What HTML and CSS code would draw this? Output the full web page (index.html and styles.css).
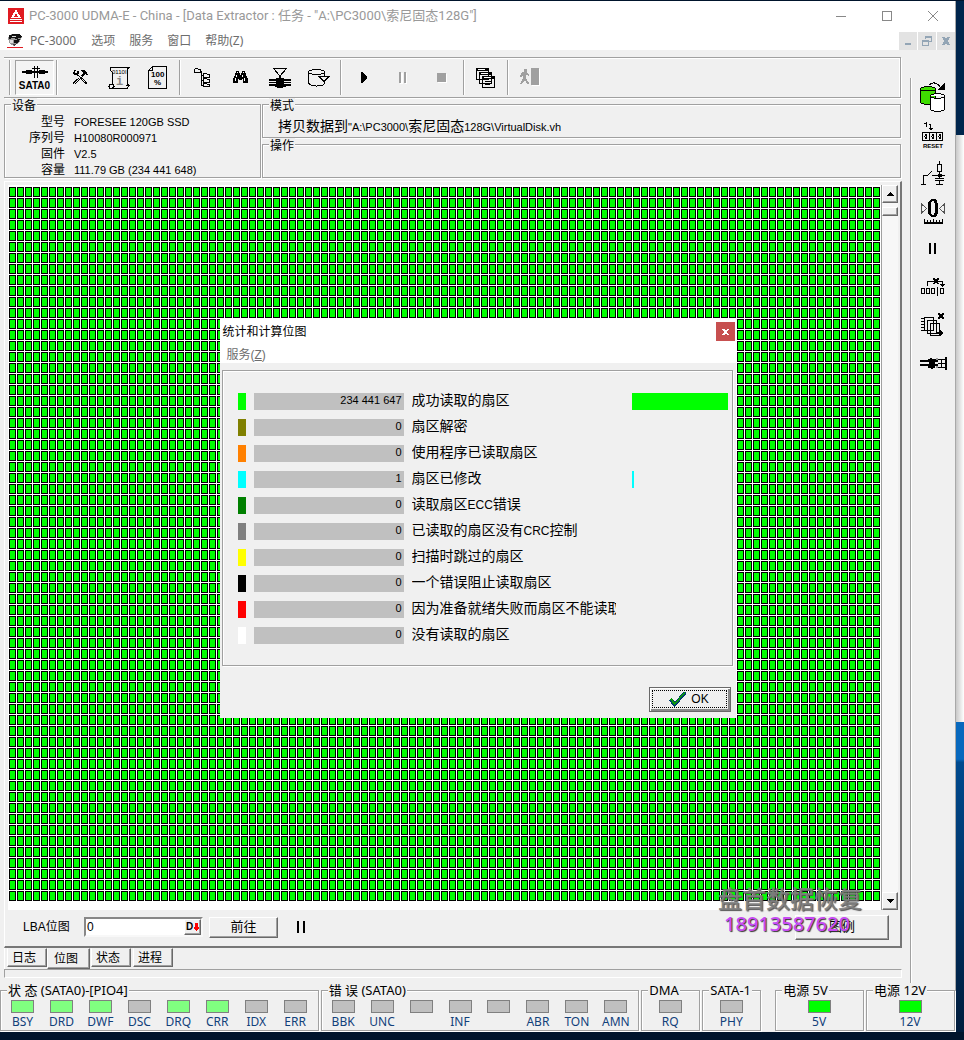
FILE: index.html
```html
<!DOCTYPE html>
<html lang="zh-CN">
<head>
<meta charset="utf-8">
<title>PC-3000 UDMA-E</title>
<link rel="stylesheet" href="styles.css">
</head>
<body>
<div class="desktop">
<div class="window">
  <header class="titlebar">
    <svg class="logo" width="16" height="16" viewBox="0 0 16 16"><path fill="#e01b22" d="M0 0h16v16H0z"/><path fill="#fff" d="M8 1l5 9H3zM2 11h12v1H2zM2 13h12v1H2z"/><path fill="#e01b22" d="M8 5l2 4H6z"/></svg>
    <h1>PC-3000 UDMA-E - China - [Data Extractor : 任务 - "A:\PC3000\索尼固态128G"]</h1>
    <div class="win-buttons">
      <button aria-label="最小化"><svg width="11" height="11"><path d="M0 5.500h10"/></svg></button>
      <button aria-label="最大化"><svg width="11" height="11"><path d="M.5.5h9v9h-9z"/></svg></button>
      <button aria-label="关闭"><svg width="11" height="11"><path d="M0 0l10 10M10 0L0 10"/></svg></button>
    </div>
  </header>
  <nav class="menubar">
    <svg class="logo" width="16" height="16" viewBox="0 0 16 16"><path fill="#999" d="M1 4l4-3h8l2 3-3 6-5 3-5-3z"/><path fill="#111" d="M2 2l5-1h6l2 3-5 2-4-1-4 1zM7 7l6-1-2 4H7z"/><path fill="#ddd" d="M5 3h4v1H5zM3 7h3v3H3z"/><path fill="#444" d="M3 9l3 2 5-1-4 3z"/><path fill="#e01b22" d="M0 14h16v1H0z"/></svg>
    <a href="#">PC-3000</a><a href="#">选项</a><a href="#">服务</a><a href="#">窗口</a><a href="#">帮助(Z)</a>
    <div class="mdi">
      <button aria-label="最小化"><svg width="10" height="10"><path d="M2 7h6v2H2z"/></svg></button>
      <button aria-label="还原"><svg width="10" height="10"><path fill-rule="evenodd" d="M3 0h7v6H7V5h2V2H4v1H3zM0 4h7v6H0zm1 2v3h5V6z"/></svg></button>
      <button aria-label="关闭"><svg width="10" height="10"><path d="M1 1h3l1 2 1-2h3L7 5l2 4H6L5 7 4 9H1l2-4z"/></svg></button>
    </div>
  </nav>

  <div class="workspace">
    <main class="main">
      <div class="toolbar">
        <i class="sep"></i>
        <button class="tool pressed"><svg width="26" height="13" viewBox="0 0 26 13"><path d="M0 5h26v2H0zM4 4h6v4H4zM17 4h6v4h-6zM12 0h1v12h-1zM15 0h1v12h-1zM10 2h8v1h-8z"/></svg><span>SATA0</span></button>
        <i class="sep wide"></i>
        <button class="tool" aria-label="工具"><svg width="16" height="15" viewBox="0 0 16 15"><path d="M2 0h2v1H3v2h2V1h2v3H6v1h1v1h1v1H7V6H5V5H2V4H1V2h1zM9 0h4v1h1v1h1v2h1v1h-2V4h-1v1h-1v1h-1v1h-1V6H9V5h1V4h1V2h-1V1H9zM8 7h2v1h1v1h1v1h1v1h1v1h1v2h-2v-1h-1v-1h-1v-1h-1v-1H9V9H8zM6 8h1v1H6v1H5v1H4v1H3v1H2v1H1v-2h1v-1h1v-1h1V9h2zM7 9h1v1H7v1H6v1H5v1H4v1H3v-1h1v-1h1v-1h1v-1h1z"/><path fill="#f0f0f0" d="M10 9h1v1h1v1h1v1h-1v-1h-1v-1h-1z"/></svg></button>
        <button class="tool" aria-label="信息"><svg width="22" height="22" viewBox="0 0 22 22"><path fill="none" stroke="#000" d="M3 .5h18l-2 2v14l2 2-2 3H2l-1-2 1-2h2V5L2 3zM1 17.500h4l1 2-2 2M18 18l2 1"/><text x="4" y="7" font-size="6">0110I</text><text x="8" y="18" font-size="12" font-weight="700" fill="#888" font-family="Liberation Mono">i</text></svg></button>
        <button class="tool" aria-label="百分比"><svg width="19" height="23" viewBox="0 0 19 23"><path fill="none" stroke="#000" d="M4.500.5h14v22H.5V4.500z M4.500 1v3.500H1"/><text x="3" y="11" font-size="8" font-weight="700">100</text><text x="6" y="19" font-size="8" font-weight="700">%</text></svg></button>
        <i class="sep"></i>
        <button class="tool" aria-label="树"><svg width="16" height="20" viewBox="0 0 16 20"><path fill="none" stroke="#000" d="M.5 1.500l1-1h2l1 1h2v3h-6zM7.500 3v15M7 7.500h2M7 12.500h2M7 17.500h2M9.500 5.500h3l1 1h2v3h-6zM9.500 10.500h3l1 1h2v3h-6zM9.500 15.500h3l1 1h2v2h-6zM9 9.500h7M9 14.500h7M9 18.500h7"/></svg></button>
        <button class="tool" aria-label="查找"><svg width="15" height="13" viewBox="0 0 15 13"><path d="M3 0h3v2h1v2h1V2h1V0h3v2h1v2l2 4v4h-5V8H9v1H6V8H5v4H0V8l2-4V2h1z"/><path fill="#fff" d="M4 1h1v1H4zM10 1h1v1h-1zM3 4h1v2H3zM9 4h1v2H9zM2 7h1v3H2zM11 7h1v3h-1z"/></svg></button>
        <button class="tool" aria-label="过滤"><svg width="22" height="20" viewBox="0 0 22 20"><path fill="none" stroke="#000" d="M4.500.5h13L11 8z"/><path d="M10 7h2v3h3v1h7v2H0v-2h7v-1h3zM0 14h22v1H0zM7 13h8v3H7zM0 16h22v2h-5v1h-3v1H8v-1H6v-1H0z"/></svg></button>
        <button class="tool" aria-label="磁盘"><svg width="22" height="18" viewBox="0 0 22 18"><path fill="none" stroke="#000" d="M.5 3v11c1 2 4 3 8 3s8-1 8-3V13M16.500 7V3c0-1-3-2.500-8-2.500S.5 2 .5 3s3 2.500 8 2.500 8-1.500 8-2.500M11 7.500h10l-5 5z"/></svg></button>
        <i class="sep wide"></i>
        <button class="tool" aria-label="开始"><svg width="6" height="11"><path d="M0 0h1l5 5v1l-5 5H0z"/></svg></button>
        <button class="tool" aria-label="暂停" disabled><svg width="8" height="12"><path fill="#fff" d="M1 1h3v11H1zM6 1h2v11H6z"/><path fill="#a0a0a0" d="M0 0h2v11H0zM5 0h2v11H5z"/></svg></button>
        <button class="tool" aria-label="停止" disabled><svg width="10" height="10"><path fill="#fff" d="M1 1h9v9H1z"/><path fill="#a0a0a0" d="M0 0h9v9H0z"/></svg></button>
        <i class="sep"></i>
        <button class="tool" aria-label="窗口"><svg width="20" height="20" viewBox="0 0 20 20"><g fill="#f0f0f0" stroke="#000"><path d="M.5.5h12v11H.5zM3.500 4.500h12v11h-12zM6.500 8.500h12v11h-12z"/></g><path d="M0 0h13v3H0zM3 4h13v3H3zM6 8h13v3H6zM9 13h7v1H9zM9 16h5v1H9z"/><path fill="#fff" d="M2 1h7v1H2zM5 5h7v1H5zM8 9h7v1H8z"/></svg></button>
        <i class="sep"></i>
        <button class="tool" aria-label="退出" disabled><svg width="20" height="19" viewBox="0 0 20 19"><path fill="#fff" d="M12 1h8v17h-8z"/><path fill="#a0a0a0" d="M11 0h8v17h-8zM4 1h3v3H4zM3 4h4l2 3v1L6 7v3l3 5-1 2-3-5-3 4H0l3-6V7L1 9H0l1-4z"/></svg></button>
      </div>

      <div class="info">
        <fieldset class="group device"><legend>设备</legend>
          <dl>
            <dt>型号</dt><dd>FORESEE 120GB SSD</dd>
            <dt>序列号</dt><dd>H10080R000971</dd>
            <dt>固件</dt><dd>V2.5</dd>
            <dt>容量</dt><dd>111.79 GB (234 441 648)</dd>
          </dl>
        </fieldset>
        <div class="modes">
          <fieldset class="group"><legend>模式</legend><p class="path"><span class="han">拷贝数据到</span>"A:\PC3000\<span class="han">索尼固态</span>128G\VirtualDisk.vhd"</p></fieldset>
          <fieldset class="group"><legend>操作</legend></fieldset>
        </div>
      </div>

      <section class="panel">
        <div class="map">
          <div class="cells"></div>
          <div class="scroll">
            <button class="raised" aria-label="向上"><svg width="7" height="4"><path d="M3 0h1l3 4H0z"/></svg></button>
            <div class="thumb raised"></div>
            <button class="raised down" aria-label="向下"><svg width="7" height="4"><path d="M0 0h7L4 4H3z"/></svg></button>
          </div>
        </div>
        <div class="controls">
          <label for="lba">LBA位图</label>
          <div class="lba"><input id="lba" type="text" value="0"><button class="raised" aria-label="十进制">D<svg width="5" height="8"><path fill="#f00" d="M1 0h3v4h1v1L3 8H2L0 5V4h1z"/></svg></button></div>
          <button class="raised go">前往</button>
          <svg width="8" height="12"><path d="M0 0h2v12H0zM6 0h2v12H6z"/></svg>
          <button class="raised legend-btn">图例</button>
          <div class="watermark"><b>盘首数据恢复</b><strong>18913587620</strong></div>
        </div>
      </section>
      <div class="tabs"><button>日志</button><button class="active">位图</button><button>状态</button><button>进程</button></div>
      <div class="progress"></div>
    </main>

    <aside class="side">
      <button aria-label="复制"><svg width="26" height="30" viewBox="0 0 26 30"><path fill="none" stroke="#000" d="M9 3c3-3 8-3 11 2"/><path d="M25 1v7h-8z"/><path fill="#3fdc00" stroke="#000" d="M.5 7c0-1 3-2.500 7.500-2.500S15.500 6 15.500 7v13c0 1-3 2.500-7.500 2.500S.5 21 .5 20z"/><path fill="none" stroke="#000" d="M.5 7c0 1 3 2 7.500 2s7.500-1 7.500-2"/><path fill="#fff" stroke="#000" d="M10.500 14c0-1 3-2.500 7-2.500s7 1.500 7 2.500v13c0 1-3 2.500-7 2.500s-7-1.500-7-2.500zc0 1 3 2.500 7 2.500s7-1.500 7-2.500"/></svg></button>
      <button aria-label="复位"><svg width="22" height="27" viewBox="0 0 22 27"><path d="M4 0h1v5H4V2H2V1h2zM7 2h2v4h2l-2 2H8L6 6h2V3H7z"/><path fill="none" stroke="#000" d="M.5 10.500h20v8H.5zM7.500 10v8M14.500 10v8"/><ellipse cx="4" cy="14.500" rx="1" ry="2.500" fill="none" stroke="#000"/><ellipse cx="11" cy="14.500" rx="1" ry="2.500" fill="none" stroke="#000"/><ellipse cx="18" cy="14.500" rx="1" ry="2.500" fill="none" stroke="#000"/><text x="1" y="26" font-size="6" font-weight="700">RESET</text></svg></button>
      <button aria-label="电源"><svg width="24" height="24" viewBox="0 0 24 24"><path fill="none" stroke="#000" d="M0 23.500h5M2.500 23V14.500h4l4-4M11 14.500h13M18.500 0v3M16.500 3.500h4v7h-4zM18.500 11v6M14 17.500h9M14 19.500h9M18.500 20v3M15 23.500h7"/><path d="M17 13h4v3h-4z"/></svg></button>
      <button aria-label="归零"><svg width="24" height="27" viewBox="0 0 24 27"><path fill="none" stroke="#555" d="M.5 6l5 4.500-5 4.500zM23.500 6l-5 4.500 5 4.500z"/><path fill-rule="evenodd" d="M10 1h4l2 2 1 3v9l-1 2-2 2h-4l-2-2-1-2V6l1-3zM11 3l-1 3v8l1 3h2l1-3V6l-1-3z"/><path d="M3 24h19v2H3zM3 21h1v3H3zM6 22h1v2H6zM9 22h1v2H9zM12 21h1v3h-1zM15 22h1v2h-1zM18 22h1v2h-1zM21 21h1v3h-1z"/></svg></button>
      <button aria-label="暂停"><svg width="8" height="12"><path d="M0 0h2v11H0zM5 0h2v11H5z"/></svg></button>
      <button aria-label="跳过"><svg width="24" height="20" viewBox="0 0 24 20"><path fill="none" stroke="#000" d="M6.500 9V4.500h15V8M.5 11.500h3v5h-3zM5.500 11.500h3v5h-3zM10.500 11.500h3v5h-3zM16.500 10v9M19.500 11.500h3v5h-3z"/><path d="M12 1h2v1h2V1h2v2h-1v3h1v1h-2V6h-2v1h-2V6h1V3h-1zM19 7h5l-2 3h-1z"/></svg></button>
      <button aria-label="多副本"><svg width="24" height="26" viewBox="0 0 24 26"><g fill="#f0f0f0" stroke="#000"><path d="M3.500 5.500h9v13h-9zM6.500 8.500h9v13h-9zM9.500 11.500h9v12h-9z"/></g><path d="M0 6h3v1H0zM0 9h3v1H0zM0 12h3v1H0zM0 15h3v1H0zM0 18h3v1H0zM17 1h2v1h2V1h2v2h-1v2h1v2h-2V6h-2v1h-2V5h1V3h-1zM16 20h3v-2l3 3-3 3v-2h-3z"/></svg></button>
      <button aria-label="接口"><svg width="27" height="13" viewBox="0 0 27 13"><path d="M0 3h8V2h2V1h2v1h4v1h2v2H0zM0 7h18v2h-3v2h-2v1h-2v-1H8V9H0zM9 5h6v2H9zM25 0h2v13h-2zM18 2h7v1h-7zM18 6h7v1h-7zM18 10h7v1h-7zM21 2h1v9h-1z"/><path fill="#999" d="M16 1h2v2h-2zM16 9h2v2h-2z"/></svg></button>
    </aside>
  </div>

  <footer class="signals">
    <fieldset class="group sig"><legend>状 态 (SATA0)-[PIO4]</legend><div class="leds">
      <span class="on">BSY</span><span class="on">DRD</span><span class="on">DWF</span><span>DSC</span><span class="on">DRQ</span><span class="on">CRR</span><span>IDX</span><span>ERR</span></div></fieldset>
    <fieldset class="group sig"><legend>错 误 (SATA0)</legend><div class="leds">
      <span>BBK</span><span>UNC</span><span></span><span>INF</span><span></span><span>ABR</span><span>TON</span><span>AMN</span></div></fieldset>
    <fieldset class="group sig"><legend>DMA</legend><div class="leds"><span>RQ</span></div></fieldset>
    <fieldset class="group sig"><legend>SATA-1</legend><div class="leds"><span>PHY</span></div></fieldset>
    <fieldset class="group sig power"><legend>电源 5V</legend><div class="leds"><span class="full">5V</span></div></fieldset>
    <fieldset class="group sig"><legend>电源 12V</legend><div class="leds"><span class="full">12V</span></div></fieldset>
  </footer>

  <dialog class="stats" open aria-label="统计和计算位图">
    <header><h2>统计和计算位图</h2><button class="close" aria-label="关闭"><svg width="7" height="6"><path d="M0 0h2l1 1h1l1-1h2L5 3l2 3H5L4 5H3L2 6H0l2-3z"/></svg></button></header>
    <nav><a href="#">服务(<u>Z</u>)</a></nav>
    <div class="frame">
      <table>
        <tr><td class="key lime"></td><td class="num">234 441 647</td><td class="name">成功读取的扇区</td><td class="chart"><i class="bar lime" style="width:100%"></i></td></tr>
        <tr><td class="key olive"></td><td class="num">0</td><td class="name">扇区解密</td><td class="chart"></td></tr>
        <tr><td class="key orange"></td><td class="num">0</td><td class="name">使用程序已读取扇区</td><td class="chart"></td></tr>
        <tr><td class="key cyan"></td><td class="num">1</td><td class="name">扇区已修改</td><td class="chart"><i class="bar cyan" style="width:1%"></i></td></tr>
        <tr><td class="key green"></td><td class="num">0</td><td class="name">读取扇区<span>ECC</span>错误</td><td class="chart"></td></tr>
        <tr><td class="key gray"></td><td class="num">0</td><td class="name">已读取的扇区没有<span>CRC</span>控制</td><td class="chart"></td></tr>
        <tr><td class="key yellow"></td><td class="num">0</td><td class="name">扫描时跳过的扇区</td><td class="chart"></td></tr>
        <tr><td class="key black"></td><td class="num">0</td><td class="name">一个错误阻止读取扇区</td><td class="chart"></td></tr>
        <tr><td class="key red"></td><td class="num">0</td><td class="name">因为准备就绪失败而扇区不能读取</td><td class="chart"></td></tr>
        <tr><td class="key white"></td><td class="num">0</td><td class="name">没有读取的扇区</td><td class="chart"></td></tr>
      </table>
    </div>
    <div class="actions"><button class="ok raised"><span><svg width="17" height="15" viewBox="0 0 17 15"><path fill="#003c70" d="M0 8l3-2 3 4L14 0h3v2L6 15H5z"/><path fill="#0a9a0a" d="M1 7l2-1 3 5L15 0h1v1L6 13H5z"/></svg>OK</span></button></div>
  </dialog>
</div>
<div class="behind"><i class="page"></i><i class="sky"></i></div>
</div>
</body>
</html>
```
FILE: styles.css
```css
* { box-sizing: border-box; }
body {
  margin: 0;
  font: 12px/16px "Liberation Sans", "Noto Sans CJK SC", sans-serif;
  color: #000;
}
button, input { font: inherit; color: inherit; padding: 0; margin: 0; border: 0; background: none; border-radius: 0; }
a { color: inherit; text-decoration: none; }
h1, h2, p, dl, dd { margin: 0; font-size: 12px; font-weight: 400; }
svg { display: block; flex: none; shape-rendering: crispEdges; font-family: "Liberation Sans", sans-serif; }

.desktop {
  min-height: 100vh;
  display: grid;
  grid-template-columns: 1fr 8px;
  padding: 1px 0 8px;
  background: #00142c;
}
.behind { display: flex; flex-direction: column; padding-top: 134px; background: #00254c; }
.behind .page { flex: 587; background: linear-gradient(90deg, #c8c8c8, #fff); }
.behind .sky { flex: 310; background: linear-gradient(#0868bd 0 12%, #004a8f 13%, #002a57 70%, #001c3c); }

.window {
  position: relative;
  display: flex;
  flex-direction: column;
  background: #f0f0f0;
  border-right: 1px solid #a8a8a8;
  min-width: 0;
}
.titlebar, .menubar {
  display: flex;
  align-items: center;
  background: #fff;
  font-family: "Noto Sans", "Noto Sans CJK SC", sans-serif;
}
.titlebar { height: 30px; padding-left: 8px; gap: 5px; color: #999; }
.titlebar h1 { flex: 1; font: 13px/16px Roboto, "Noto Sans CJK SC", sans-serif; white-space: nowrap; overflow: hidden; }
.win-buttons { display: flex; margin-right: -1px; }
.win-buttons button { width: 46px; height: 28px; display: grid; place-items: center; }
.win-buttons path { fill: none; stroke: #888; }
.menubar { height: 19px; padding-left: 7px; gap: 14px; color: #6d6d6d; }
.menubar .logo { margin-right: -7px; }
.menubar a:nth-of-type(2) { margin-left: 1px; }
.mdi { display: flex; gap: 1px; margin-left: auto; height: 18px; }
.mdi button { width: 18px; height: 18px; background: #e3e3e3; display: grid; place-items: center; }
.mdi path { fill: #93a5b5; }

.workspace { flex: 1; display: flex; gap: 8px; }
.main { flex: 1; min-width: 0; display: flex; flex-direction: column; padding: 7px 0 5px 4px; }
.toolbar {
  display: flex;
  height: 41px;
  margin-right: 1px;
  padding: 2px 0 2px 5px;
  border: 1px solid #a0a0a0;
  border-left: 0;
  box-shadow: 1px 1px 0 #fff, inset -1px 1px 0 #fff;
}
.sep { width: 5px; border-left: 1px solid #a0a0a0; box-shadow: inset 1px 0 0 #fff; margin: 0 -2px 0 2px; }
.sep.wide { width: 6px; }
.toolbar .sep:first-child { margin: 0 1px 0 0; }
.tool { width: 39px; display: flex; flex-direction: column; align-items: center; justify-content: center; }
.tool.pressed { gap: 2px; padding-top: 2px; border: 1px solid; border-color: #a0a0a0 #fff #fff #a0a0a0; background: #f4f4f4; font: 700 10px/10px "Liberation Sans", sans-serif; }

.group {
  min-width: 0;
  margin: 0;
  padding: 0;
  border: 1px solid #a0a0a0;
  box-shadow: 1px 1px 0 #fff, inset 1px 1px 0 #fff;
}
.group legend { height: 12px; line-height: 12px; margin-left: 6px; padding: 0 1px; background: #f0f0f0; }
.info { display: flex; gap: 1px; margin-right: 1px; }
.info .group legend { line-height: 16px; }
.device { flex: 0 0 257px; }
.device dl { display: grid; grid-template-columns: 60px 1fr; column-gap: 9px; padding: 3px 0 0; }
.device dt { text-align: right; height: 16px; line-height: 18px; }
.device dd { font-size: 11px; height: 16px; line-height: 18px; }
.modes { flex: 1; min-width: 0; display: flex; flex-direction: column; }
.modes .group { flex: 1; }
.path { width: 283px; height: 20px; line-height: 20px; margin: 6px 0 -1px 15px; font-size: 11px; overflow: hidden; white-space: nowrap; }
.han { font-size: 14px; }

.panel {
  flex: 1;
  display: flex;
  flex-direction: column;
  margin-top: 3px;
  padding: 3px 2px 0 3px;
  border: solid;
  border-width: 1px 2px 2px 1px;
  border-color: #fff #777 #777 #fff;
}
.map { flex: 1; display: flex; padding-left: 1px; background: #fff; }
.cells {
  flex: 1;
  margin: 2px 0 9px;
  background:
    linear-gradient(90deg, transparent 7px, #fff 7px) 0 0 / 8px 11px,
    linear-gradient(transparent 10px, #fff 10px) 0 0 / 8px 11px,
    linear-gradient(90deg, #000 1px, transparent 1px 6px, #000 6px) 0 0 / 8px 11px,
    linear-gradient(#000 1px, transparent 1px 9px, #000 9px) 0 0 / 8px 11px,
    #0f0;
}
.raised {
  background: #f0f0f0;
  border: 1px solid;
  border-color: #fff #696969 #696969 #fff;
  box-shadow: inset -1px -1px 0 #a0a0a0;
}
.scroll {
  width: 17px;
  display: flex;
  flex-direction: column;
  background: #f7f7f7;
  border-left: 1px solid #a0a0a0;
}
.scroll button { height: 18px; display: grid; place-items: center; }
.scroll .thumb { height: 9px; margin-top: 4px; }
.scroll .down { margin-top: auto; }
.controls { position: relative; height: 36px; display: flex; align-items: center; padding: 0 9px 2px 15px; }
.controls label { width: 61px; }
.lba {
  display: flex;
  width: 119px;
  height: 20px;
  background: #fff;
  border: 2px solid;
  border-color: #888 #f8f8f8 #f8f8f8 #888;
}
.lba input { flex: 1; min-width: 0; padding-left: 1px; outline: 0; }
.lba button { width: 17px; display: flex; align-items: center; justify-content: center; gap: 1px; font: 700 10px/12px "Liberation Sans", sans-serif; }
.go { width: 69px; height: 21px; margin: 0 19px 0 6px; font-size: 13px; line-height: 14px; }
.legend-btn { width: 94px; height: 25px; margin-left: auto; font-size: 13px; line-height: 14px; }
.watermark { position: absolute; right: 36px; bottom: 11px; display: flex; flex-direction: column; font-family: "Noto Sans", "Noto Sans CJK SC", sans-serif; pointer-events: none; }
.watermark b { font-size: 24px; line-height: 28px; font-weight: 500; color: rgba(128, 128, 128, .9); text-shadow: 1px 1px 1px #555; }
.watermark strong { padding-left: 6px; font-size: 20px; line-height: 22px; font-weight: 500; color: #c84bf5; text-shadow: 1px 1px 1px #333; }

.tabs { display: flex; align-items: flex-start; gap: 2px; height: 21px; padding-left: 2px; border-left: 1px solid #fff; }
.tabs button { width: 40px; height: 19px; text-align: left; padding-left: 4px; border: 1px solid; border-color: #f0f0f0 #696969 #696969 #fff; box-shadow: inset -1px -1px 0 #a0a0a0; }
.tabs .active { width: 43px; height: 21px; margin: 0 -1px 0 -2px; padding: 1px 0 0 6px; background: #f0f0f0; }
.progress { height: 9px; border: 1px solid; border-color: #a0a0a0 #fff #fff #a0a0a0; }

.side {
  width: 45px;
  margin: 28px 0 0;
  display: flex;
  flex-direction: column;
  border-left: 1px solid #a0a0a0;
  box-shadow: inset 1px 0 0 #fff;
}
.side button { height: 38px; display: grid; place-items: center; }

.signals {
  display: grid;
  grid-template-columns: 319fr 319fr 59fr 59fr 101fr 89fr;
  gap: 2px;
  height: 49px;
  padding: 1px 0;
  font: 13px/16px "Noto Sans", "Noto Sans CJK SC", sans-serif;
}
.power { margin-left: 12px; }
.leds { display: grid; grid-auto-flow: column; grid-auto-columns: 1fr; padding: 4px 3px 0 2px; color: #11407a; text-align: center; font-size: 12px; }
.leds span { display: flex; flex-direction: column; align-items: center; gap: 1px; height: 28px; line-height: 16px; }
.leds span::before { content: ""; flex: none; width: 21px; height: 11px; border: 1px solid #808080; background: #c0c0c0; }
.leds .on::before { background: #80ff80; }
.leds .full::before { background: #0f0; }

.stats {
  position: absolute;
  top: 318px;
  width: 516px;
  height: 399px;
  margin: 0 auto;
  padding: 0;
  display: flex;
  flex-direction: column;
  background: #f0f0f0;
  border: 0;
  color: #000;
}
.stats header { display: flex; justify-content: space-between; align-items: center; height: 25px; padding: 0 1px 0 3px; background: #fff; }
.close { width: 19px; height: 19px; background: #c75050; display: grid; place-items: center; }
.close path { fill: #fff; }
.stats nav { height: 19px; line-height: 22px; padding-left: 7px; background: #fff; color: #6d6d6d; }
.frame { margin: 7px 3px 0 2px; padding: 17px 4px 0 15px; height: 296px; border: 1px solid #a0a0a0; box-shadow: 1px 1px 0 #fff, inset 1px 1px 0 #fff; }
.frame table, .frame tbody { display: block; }
.frame tr { display: grid; grid-template-columns: 8px 150px 204px 1fr; column-gap: 8px; height: 26px; align-items: center; }
.frame td { padding: 0; height: 17px; }
.num { background: #c0c0c0; text-align: right; font-size: 11px; line-height: 14px; }
.frame .num { padding-right: 2px; }
.name { font-size: 14px; line-height: 14px; overflow: hidden; white-space: nowrap; }
.name span { font-size: 12px; }
.frame .chart { padding-left: 8px; }
.bar { display: block; height: 17px; min-width: 2px; }
.lime { background: #0f0; }
.olive { background: #808000; }
.orange { background: #ff8000; }
.cyan { background: #0ff; }
.green { background: #008000; }
.gray { background: #808080; }
.yellow { background: #ff0; }
.black { background: #000; }
.red { background: #f00; }
.white { background: #fff; }
.actions { display: flex; justify-content: flex-end; padding: 21px 5px 0 0; }
.ok { width: 82px; height: 25px; padding: 2px; border-color: #696969; box-shadow: inset 1px 1px 0 #fff, inset -2px -2px 0 #888; }
.ok span { display: flex; align-items: center; justify-content: center; gap: 5px; height: 18px; margin: 0 1px 1px 0; border: 1px dotted #000; }
```
